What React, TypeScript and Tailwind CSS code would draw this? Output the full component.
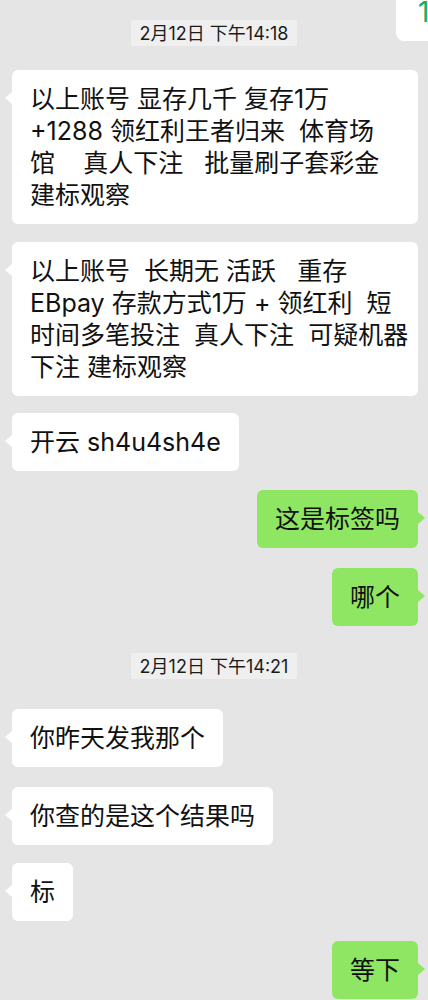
import React from "react";

const FONT = { fontFamily: 'Inter, "Noto Sans CJK SC", sans-serif' };

function Stamp({ text, className = "" }: { text: string; className?: string }) {
  return (
    <div className={"self-center flex items-center justify-center h-[26px] px-[9px] bg-[#efefef] text-[18px] text-[#1c1c1c] rounded-[2px] " + className}>
      {text}
    </div>
  );
}

function Left({ lines, className = "", wide = false }: { lines: string[]; className?: string; wide?: boolean }) {
  return (
    <div className={"relative self-start ml-[12px] bg-white rounded-[6px] px-[18px] py-[13px] text-[25px] leading-[32px] text-[#111] " + (wide ? "w-[406px] " : "") + className}>
      <span className="absolute left-[-7px] top-[22px] w-0 h-0 border-y-[6px] border-y-transparent border-r-[7px] border-r-white" />
      {lines.map((l, i) => (
        <div key={i} className="whitespace-pre">{l}</div>
      ))}
    </div>
  );
}

function Right({ text, className = "" }: { text: string; className?: string }) {
  return (
    <div className={"relative self-end mr-[10px] bg-[#8ee663] rounded-[6px] px-[18px] py-[13px] text-[25px] leading-[32px] text-[#111] " + className}>
      <span className="absolute right-[-7px] top-[22px] w-0 h-0 border-y-[6px] border-y-transparent border-l-[7px] border-l-[#8ee663]" />
      <div className="whitespace-pre">{text}</div>
    </div>
  );
}

export default function App() {
  return (
    <div className="relative w-full h-[1000px] overflow-hidden bg-[#e5e5e5] flex flex-col pt-[20px]" style={FONT}>
      <div className="absolute left-[396px] top-[-20px] w-[80px] h-[61px] bg-white rounded-[8px] pl-[22px] pt-[16px] text-[28px] leading-[32px] text-[#1aad5a]">
        1
      </div>
      <Stamp text="2月12日 下午14:18" />
      <Left
        wide
        className="mt-[24px]"
        lines={["以上账号 显存几千 复存1万", "+1288 领红利王者归来  体育场", "馆    真人下注   批量刷子套彩金", "建标观察"]}
      />
      <Left
        wide
        className="mt-[18px]"
        lines={["以上账号  长期无 活跃   重存", "EBpay 存款方式1万 + 领红利  短", "时间多笔投注  真人下注  可疑机器", "下注 建标观察"]}
      />
      <Left className="mt-[17px]" lines={["开云 sh4u4sh4e"]} />
      <Right className="mt-[19px]" text="这是标签吗" />
      <Right className="mt-[20px]" text="哪个" />
      <Stamp className="mt-[27px]" text="2月12日 下午14:21" />
      <Left className="mt-[30px]" lines={["你昨天发我那个"]} />
      <Left className="mt-[20px]" lines={["你查的是这个结果吗"]} />
      <Left className="mt-[18px]" lines={["标"]} />
      <Right className="mt-[20px]" text="等下" />
    </div>
  );
}
